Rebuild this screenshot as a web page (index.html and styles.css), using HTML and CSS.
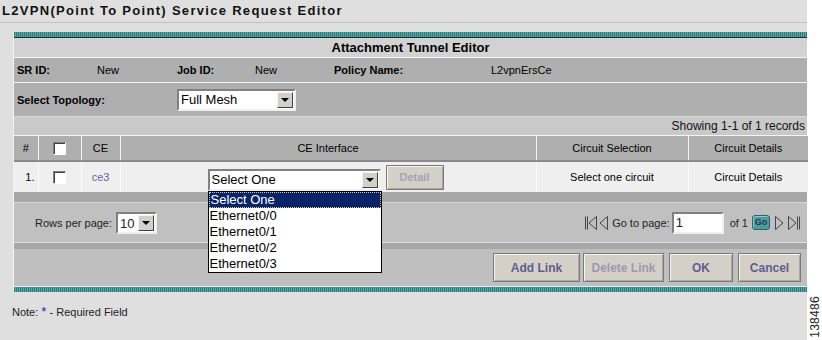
FILE: index.html
```html
<!DOCTYPE html>
<html lang="en">
<head>
    <meta charset="UTF-8">
    <title>L2VPN Service Request Editor</title>
    <link rel="stylesheet" href="styles.css">
</head>
<body>
<div class="page">
    <div class="main">
        <div class="title-bar">L2VPN(Point To Point) Service Request Editor</div>

        <div class="editor">
            <div class="teal-band"></div>
            <div class="editor-head">Attachment Tunnel Editor</div>

            <div class="info-row">
                <span class="lbl">SR ID:</span>
                <span class="val">New</span>
                <span class="lbl">Job ID:</span>
                <span class="val">New</span>
                <span class="lbl">Policy Name:</span>
                <span class="val">L2vpnErsCe</span>
            </div>

            <div class="topology-row">
                <span class="lbl">Select Topology:</span>
                <div class="select select-topology">
                    <span class="select-text">Full Mesh</span>
                    <span class="select-arrow"><i></i></span>
                </div>
            </div>

            <div class="showing-row">Showing 1-1 of 1 records</div>

            <table class="grid">
                <colgroup>
                    <col style="width:24px">
                    <col style="width:43px">
                    <col style="width:39px">
                    <col style="width:416px">
                    <col style="width:152px">
                    <col style="width:120px">
                </colgroup>
                <thead>
                    <tr>
                        <th>#</th>
                        <th><span class="checkbox"></span></th>
                        <th>CE</th>
                        <th>CE Interface</th>
                        <th>Circuit Selection</th>
                        <th>Circuit Details</th>
                    </tr>
                </thead>
                <tbody>
                    <tr>
                        <td class="row-num">1.</td>
                        <td><span class="checkbox"></span></td>
                        <td><a class="ce-link">ce3</a></td>
                        <td>
                            <div class="iface">
                                <div class="select select-iface">
                                    <span class="select-text">Select One</span>
                                    <span class="select-arrow"><i></i></span>
                                    <ul class="dropdown">
                                        <li class="active"><span>Select One</span></li>
                                        <li>Ethernet0/0</li>
                                        <li>Ethernet0/1</li>
                                        <li>Ethernet0/2</li>
                                        <li>Ethernet0/3</li>
                                    </ul>
                                </div>
                                <button class="btn btn-detail">Detail</button>
                            </div>
                        </td>
                        <td>Select one circuit</td>
                        <td>Circuit Details</td>
                    </tr>
                </tbody>
            </table>

            <div class="band"></div>

            <div class="pager-row">
                <div class="rows-per-page">
                    <span>Rows per page:</span>
                    <div class="select select-rows">
                        <span class="select-text">10</span>
                        <span class="select-arrow"><i></i></span>
                    </div>
                </div>
                <div class="pager">
                    <svg class="pg-first" width="14" height="16" viewBox="0 0 14 16"><path d="M1.5 1.5v13M3.5 1.5v13" stroke="#444" fill="none"/><path d="M12.5 1.5L5 8l7.5 6.5z" stroke="#444" fill="none"/></svg>
                    <svg class="pg-prev" width="10" height="16" viewBox="0 0 10 16"><path d="M8.5 1.5L1 8l7.5 6.5z" stroke="#444" fill="none"/></svg>
                    <span class="pg-label">Go to page:</span>
                    <span class="page-input">1</span>
                    <span class="pg-of">of 1</span>
                    <span class="go-btn">Go</span>
                    <svg class="pg-next" width="10" height="16" viewBox="0 0 10 16"><path d="M1.5 1.5L9 8l-7.5 6.5z" stroke="#444" fill="none"/></svg>
                    <svg class="pg-last" width="14" height="16" viewBox="0 0 14 16"><path d="M1.5 1.5L9 8l-7.5 6.5z" stroke="#444" fill="none"/><path d="M10.5 1.5v13M12.5 1.5v13" stroke="#444" fill="none"/></svg>
                </div>
            </div>

            <div class="band band-thin"></div>

            <div class="button-row">
                <button class="btn btn-action btn-add">Add Link</button>
                <button class="btn btn-action btn-delete">Delete Link</button>
                <button class="btn btn-action btn-ok">OK</button>
                <button class="btn btn-action btn-cancel">Cancel</button>
            </div>

            <div class="teal-band teal-bottom"></div>
        </div>

        <div class="note">Note: <span class="req">*</span> - Required Field</div>
    </div>

    <div class="side">
        <span class="fig-id">138486</span>
    </div>
</div>
</body>
</html>
```

FILE: styles.css
```css
* {
    margin: 0;
    padding: 0;
    box-sizing: border-box;
}

body {
    font-family: "Liberation Sans", Arial, sans-serif;
    font-size: 11px;
    color: #000;
    background: #fff;
}

.page {
    display: flex;
    width: 822px;
    height: 340px;
}

.main {
    width: 807px;
    background: #dfdfdf;
}

.side {
    width: 15px;
    display: flex;
    flex-direction: column;
    justify-content: flex-end;
    align-items: center;
    padding-bottom: 2px;
}

.fig-id {
    writing-mode: vertical-rl;
    transform: rotate(180deg);
    font-size: 12px;
    letter-spacing: 0.3px;
    color: #222;
}

.title-bar {
    height: 23px;
    padding-left: 2px;
    line-height: 21px;
    font-size: 13px;
    font-weight: bold;
    letter-spacing: 1.3px;
    color: #111;
    border-bottom: 1px solid #c2c2c2;
}

.editor {
    margin: 9px 0 0 13px;
    width: 794px;
    border-left: 1px solid #f4f4f4;
}

.teal-band {
    height: 6px;
    background: repeating-linear-gradient(90deg, #2a7a7a 0 1px, #5ea8a8 1px 2px);
    border-bottom: 1px solid #1c2e2e;
}

.teal-bottom {
    height: 6px;
    border-bottom: none;
    border-top: 1px solid #e8e8e8;
}

.editor-head {
    height: 20px;
    line-height: 19px;
    text-align: center;
    font-size: 13px;
    font-weight: bold;
    background: #d2d2d2;
    border-bottom: 1px solid #f4f4f4;
}

.lbl {
    font-weight: bold;
}

.info-row {
    display: grid;
    grid-template-columns: 80px 80px 78px 79px 157px 1fr;
    align-items: center;
    height: 25px;
    padding-left: 3px;
    background: #afafaf;
    border-bottom: 1px solid #f4f4f4;
}

.topology-row {
    display: grid;
    grid-template-columns: 160px auto;
    justify-content: start;
    align-items: center;
    height: 33px;
    padding-left: 3px;
    background: #afafaf;
}

/* classic win32 style select box */
.select {
    position: relative;
    display: flex;
    align-items: center;
    text-align: left;
    background: #fff;
    border: 2px solid;
    border-color: #808080 #f0f0f0 #f0f0f0 #808080;
    font-size: 13px;
}

.select-text {
    flex: 1;
    padding-left: 2px;
    white-space: nowrap;
}

.select-arrow {
    display: flex;
    align-items: center;
    justify-content: center;
    width: 16px;
    height: 16px;
    margin-right: 1px;
    background: #d4d0c8;
    border: 1px solid;
    border-color: #f4f4f4 #404040 #404040 #f4f4f4;
}

.select-arrow i {
    width: 0;
    height: 0;
    border-left: 4px solid transparent;
    border-right: 4px solid transparent;
    border-top: 4px solid #000;
}

.select-topology {
    width: 119px;
    height: 22px;
}

.showing-row {
    height: 20px;
    line-height: 19px;
    text-align: right;
    padding-right: 2px;
    background: #c9c9c9;
    border-top: 1px solid #d8d8d8;
    border-bottom: 1px solid #f4f4f4;
    font-size: 12px;
    color: #111;
}

.grid {
    width: 793px;
    table-layout: fixed;
    border-collapse: collapse;
}

.grid th {
    height: 25px;
    font-weight: normal;
    text-align: center;
    background: #afafaf;
    border-left: 1px solid #f4f4f4;
    border-bottom: 2px solid #8a8a8a;
}

.grid td {
    height: 31px;
    text-align: center;
    background: #efefef;
    border-left: 1px solid #fbfbfb;
}

.grid th:first-child,
.grid td:first-child {
    border-left: none;
}

.grid td.row-num {
    text-align: right;
    padding-right: 3px;
}

.checkbox {
    display: inline-block;
    width: 13px;
    height: 13px;
    vertical-align: middle;
    background: #fff;
    border: 1px solid;
    border-color: #808080 #fff #fff #808080;
    box-shadow: inset 1px 1px 0 #404040;
}

.ce-link {
    color: #5f5fae;
}

.iface {
    display: flex;
    align-items: center;
    justify-content: center;
    gap: 5px;
    padding-right: 5px;
}

.select-iface {
    width: 173px;
    height: 22px;
    margin-top: 5px;
}

.dropdown {
    position: absolute;
    top: 20px;
    left: -2px;
    z-index: 5;
    width: 174px;
    list-style: none;
    background: #fff;
    border: 1px solid #000;
    text-align: left;
}

.dropdown li {
    height: 16px;
    line-height: 16px;
    padding-left: 1px;
}

.dropdown li.active {
    background: #0a246a;
    color: #fff;
}

.dropdown li.active span {
    display: block;
    margin-left: -1px;
    padding-left: 1px;
    border: 1px dotted #d8c890;
    line-height: 14px;
}

.btn {
    font-family: "Liberation Sans", Arial, sans-serif;
    font-weight: bold;
    font-size: 11px;
    background: #d4d0c8;
    border: 1px solid #7a7a7a;
    box-shadow: inset 1px 1px 0 #f4f4f4, inset -1px -1px 0 #a8a8a8;
}

.btn-detail {
    width: 58px;
    height: 25px;
    color: #a3a3b4;
}

.band {
    height: 11px;
    background: #a7a7a7;
    border-bottom: 1px solid #d6d6d6;
}

.band-thin {
    height: 7px;
    border-top: 1px solid #dcdcdc;
    border-bottom: none;
}

.pager-row {
    display: flex;
    align-items: center;
    justify-content: space-between;
    height: 39px;
    padding: 0 6px 0 21px;
    background: #c0c0c0;
    font-size: 11px;
    color: #222;
}

.rows-per-page {
    display: flex;
    align-items: center;
    gap: 4px;
}

.select-rows {
    width: 41px;
    height: 22px;
    margin-top: 1px;
}

.pager {
    display: flex;
    align-items: center;
}

.pg-first { margin-right: 1px; }
.pg-prev { margin-right: 3px; }
.pg-label { margin-right: 2px; }

.page-input {
    width: 52px;
    height: 22px;
    padding-left: 2px;
    line-height: 18px;
    font-size: 13px;
    background: #fff;
    border: 2px solid;
    border-color: #808080 #f0f0f0 #f0f0f0 #808080;
    margin-right: 6px;
}

.pg-of { margin-right: 4px; }

.go-btn {
    width: 18px;
    height: 15px;
    margin-right: 4px;
    line-height: 13px;
    text-align: center;
    font-size: 9px;
    font-weight: bold;
    color: #1c3d5a;
    background: #4f9a9a;
    border: 1px solid #2c6464;
    border-radius: 3px;
    box-shadow: inset 1px 1px 0 #8cc8c8;
}

.pg-next { margin-right: 3px; }

.button-row {
    display: flex;
    justify-content: flex-end;
    align-items: center;
    height: 37px;
    padding-right: 6px;
    background: #bfbfbf;
}

.btn-action {
    height: 29px;
    color: #5e5e90;
    font-size: 12px;
}

.btn-add { width: 87px; margin-right: 3px; }
.btn-delete { width: 81px; margin-right: 5px; color: #9a9aae; }
.btn-ok { width: 64px; margin-right: 5px; }
.btn-cancel { width: 63px; }

.note {
    padding: 12px 0 0 12px;
    font-size: 11px;
    color: #222;
}

.req {
    color: #2424c8;
    font-size: 13px;
}
```
